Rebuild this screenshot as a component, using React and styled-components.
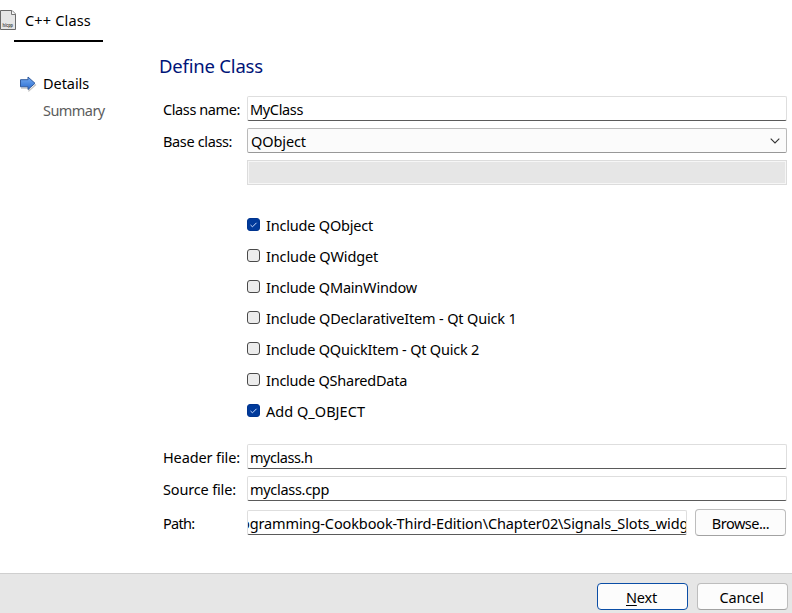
import React from 'react';
import styled, { createGlobalStyle } from 'styled-components';

const Global = createGlobalStyle`
  *, *::before, *::after { box-sizing: border-box; }
  body {
    margin: 0;
    overflow: hidden;
    background: #fff;
    color: #000;
    font: 14.5px/20px "Noto Sans", "Open Sans", sans-serif;
  }
`;

const Dialog = styled.div`
  width: 792px;
  height: 613px;
  display: flex;
  flex-direction: column;
  overflow: hidden;
`;

const Text = styled.span`
  white-space: pre;
  letter-spacing: ${(p) => p.$track || 0}px;
`;

const TabBar = styled.header`
  height: 42px;
  display: flex;
  align-items: flex-start;
`;

const IconSlot = styled.div`
  width: 14px;
  padding-top: 10px;
`;

const Tab = styled.div`
  width: 89px;
  height: 42px;
  padding: 10px 0 0 11px;
  border-bottom: 2px solid #000;
`;

const Body = styled.div`
  flex: 1;
  display: flex;
`;

const Steps = styled.nav`
  width: 159px;
  padding: 31px 0 0 19px;
`;

const Step = styled.div`
  height: 27px;
  display: flex;
  color: ${(p) => (p.$current ? '#000' : '#5c5c5c')};
`;

const StepMarker = styled.span`
  width: 24px;
  padding-top: 3px;
`;

const Page = styled.main`
  width: 628px;
  padding-top: 11px;
`;

const Title = styled.h1`
  margin: 0;
  height: 43px;
  font-size: 18.5px;
  font-weight: 400;
  line-height: 26px;
  letter-spacing: -0.2px;
  color: #001478;
`;

const Row = styled.div`
  height: ${(p) => p.$height || 25}px;
  margin-bottom: 7px;
  display: grid;
  grid-template-columns: 88px 1fr auto;
  align-items: center;
`;

const Caption = styled.label`
  padding: 0 0 0 4px;
  white-space: pre;
  letter-spacing: ${(p) => p.$track || 0}px;
`;

const Field = styled.div`
  height: 25px;
  padding: 2px 0 0 2px;
  overflow: hidden;
  background: #fff;
  border: 1px solid #dedede;
  border-bottom-color: #5a5a5a;
  border-radius: 2px;
`;

const PathField = styled(Field)`
  padding-left: 0;
  margin-right: 8px;
  display: flex;
`;

const PathText = styled(Text)`
  margin-left: -7px;
`;

const Combo = styled.div`
  height: 25px;
  padding: 0 6px 0 3px;
  display: flex;
  align-items: center;
  justify-content: space-between;
  background: #fbfbfb;
  border: 1px solid #b9b9b9;
  border-bottom-color: #989898;
  border-radius: 2px;
`;

const ComboText = styled(Text)`
  padding-top: 1px;
`;

const DisabledField = styled.div`
  height: 25px;
  background: #e6e6e6;
  border: 1px solid #dcdcdc;
  box-shadow: inset 0 0 0 1px #f6f6f6;
`;

const Options = styled.div`
  padding: 19px 0 0 88px;
  height: 252px;
`;

const Option = styled.div`
  height: 31px;
  display: flex;
  align-items: flex-start;
  gap: 6px;
`;

const Box = styled.span`
  width: 13px;
  height: 13px;
  margin-top: 7px;
  display: flex;
  border: 1px solid ${(p) => (p.$on ? '#00348f' : '#4a4a4a')};
  background: ${(p) => (p.$on ? '#003a9b' : '#ececec')};
  border-radius: 3px;
`;

const OptionLabel = styled(Text)`
  padding-top: 4px;
`;

const Button = styled.button`
  width: 91px;
  height: 27px;
  padding: 1px 2px 0 0;
  font: inherit;
  color: #000;
  letter-spacing: ${(p) => p.$track || 0}px;
  background: #fcfcfc;
  border: 1px solid ${(p) => (p.$primary ? '#0a4da6' : '#bdbdbd')};
  border-bottom-color: ${(p) => (p.$primary ? '#0a4da6' : '#a2a2a2')};
  border-radius: 4px;
`;

const BrowseButton = styled(Button)`
  margin-right: 1px;
  padding-right: 0;
`;

const Mnemonic = styled.span`
  text-decoration: underline;
  text-underline-offset: 2px;
  text-decoration-thickness: 1px;
`;

const Footer = styled.footer`
  height: 40px;
  padding: 9px 4px 0 0;
  display: flex;
  justify-content: flex-end;
  align-items: flex-start;
  gap: 9px;
  background: #e6e6e6;
  border-top: 1px solid #cfcfcf;
`;

const SvgIcon = styled.svg`
  display: block;
`;

const FileTag = styled.text`
  font: bold 5px "Liberation Sans", sans-serif;
  fill: #444;
`;

const FileIcon = () => (
  <SvgIcon width="17" height="21" viewBox="0 0 17 21">
    <path d="M.5 .5H12L15.5 4V19.5H.5Z" fill="#e6e6e6" stroke="#696969" />
    <path d="M11.5 .5V4.5H15.5" fill="#f7f7f7" stroke="#777" />
    <FileTag x="2.5" y="16.5" textLength="10.5" lengthAdjust="spacingAndGlyphs">h/cpp</FileTag>
  </SvgIcon>
);

const ArrowIcon = () => (
  <SvgIcon width="18" height="16" viewBox="0 0 18 16">
    <defs>
      <linearGradient id="arrow" x1="0" y1="0" x2="0" y2="1">
        <stop offset="0" stopColor="#77adf2" />
        <stop offset="1" stopColor="#286bd0" />
      </linearGradient>
    </defs>
    <path d="M2 12.2H10V14.8L17 8.5" fill="none" stroke="#aaa" strokeWidth="1.2" opacity=".7" />
    <path d="M1.5 3.7H9V1L16 7.3L9 13.5V10.8H1.5Z" fill="url(#arrow)" stroke="#305a9d" strokeLinejoin="round" />
  </SvgIcon>
);

const Chevron = () => (
  <SvgIcon width="10" height="6" viewBox="0 0 10 6">
    <path d="M.7 .7L5 5L9.3 .7" fill="none" stroke="#333" strokeWidth="1.1" />
  </SvgIcon>
);

const Tick = () => (
  <SvgIcon width="11" height="11" viewBox="0 0 11 11">
    <path d="M2.5 6L4.5 7.8L8.5 3.8" fill="none" stroke="#c9dcff" strokeWidth="1" />
  </SvgIcon>
);

const OPTIONS = [
  { label: 'Include QObject', track: -0.2, on: true },
  { label: 'Include QWidget', track: -0.13 },
  { label: 'Include QMainWindow', track: -0.2 },
  { label: 'Include QDeclarativeItem - Qt Quick 1', track: -0.17 },
  { label: 'Include QQuickItem - Qt Quick 2', track: -0.21 },
  { label: 'Include QSharedData', track: -0.24 },
  { label: 'Add Q_OBJECT', track: 0.03, on: true },
];

export default function App() {
  return (
    <Dialog>
      <Global />
      <TabBar>
        <IconSlot><FileIcon /></IconSlot>
        <Tab><Text $track={0.17}>C++ Class</Text></Tab>
      </TabBar>
      <Body>
        <Steps>
          <Step $current>
            <StepMarker><ArrowIcon /></StepMarker>
            <Text $track={-0.05}>Details</Text>
          </Step>
          <Step>
            <StepMarker />
            <Text $track={-0.55}>Summary</Text>
          </Step>
        </Steps>
        <Page>
          <Title>Define Class</Title>
          <Row>
            <Caption $track={-0.4}>Class name:</Caption>
            <Field><Text $track={-0.35}>MyClass</Text></Field>
          </Row>
          <Row>
            <Caption $track={-0.36}>Base class:</Caption>
            <Combo><ComboText $track={-0.1}>QObject</ComboText><Chevron /></Combo>
          </Row>
          <Row>
            <span />
            <DisabledField />
          </Row>
          <Options>
            {OPTIONS.map((o) => (
              <Option key={o.label}>
                <Box $on={o.on}>{o.on && <Tick />}</Box>
                <OptionLabel $track={o.track}>{o.label}</OptionLabel>
              </Option>
            ))}
          </Options>
          <Row>
            <Caption $track={-0.12}>Header file:</Caption>
            <Field><Text $track={-0.45}>myclass.h</Text></Field>
          </Row>
          <Row>
            <Caption $track={-0.16}>Source file:</Caption>
            <Field><Text $track={-0.3}>myclass.cpp</Text></Field>
          </Row>
          <Row $height={29}>
            <Caption $track={-0.7}>Path:</Caption>
            <PathField>
              <PathText $track={-0.11}>ogramming-Cookbook-Third-Edition\Chapter02\Signals_Slots_widg</PathText>
            </PathField>
            <BrowseButton $track={-0.5}>Browse...</BrowseButton>
          </Row>
        </Page>
      </Body>
      <Footer>
        <Button $primary $track={-0.2}><Mnemonic>N</Mnemonic>ext</Button>
        <Button $track={-0.2}>Cancel</Button>
      </Footer>
    </Dialog>
  );
}
